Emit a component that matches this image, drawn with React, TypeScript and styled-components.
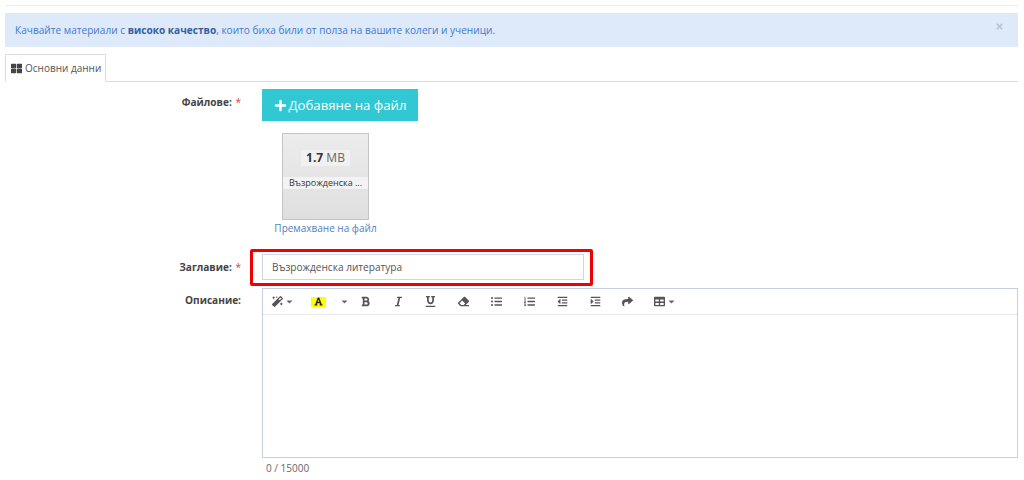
import React from 'react'
import styled, { createGlobalStyle } from 'styled-components'
import {
  FaBold,
  FaCaretDown,
  FaEraser,
  FaFont,
  FaIndent,
  FaItalic,
  FaListOl,
  FaListUl,
  FaMagic,
  FaOutdent,
  FaPlus,
  FaShare,
  FaTable,
  FaThLarge,
  FaTimes,
  FaUnderline,
} from 'react-icons/fa'

const GlobalStyle = createGlobalStyle`
  html, body {
    margin: 0;
    background: #fff;
    overflow: hidden;
  }
  body {
    font-family: "Open Sans", "Noto Sans", sans-serif;
    font-size: 10px;
    color: #444;
  }
`

const Page = styled.div`
  width: 1024px;
  height: 480px;
  box-sizing: border-box;
  padding: 5px 5px 0 5px;
  overflow: hidden;
`

const TopRule = styled.div`
  height: 1px;
  background: #eeeeee;
  margin-right: 1px;
`

const Alert = styled.div`
  margin: 7px 1px 0 0;
  height: 34px;
  background: #deeaf9;
  color: #3f78d0;
  display: flex;
  align-items: center;
  justify-content: space-between;
  padding: 0 14px 0 10px;
  font-size: 10.1px;
  strong {
    font-weight: 700;
    color: #33609f;
  }
`

const Close = styled.span`
  color: #bcc6d2;
  font-size: 9px;
  display: flex;
  margin: 0 0 7px 0;
`

const Tabs = styled.div`
  margin: 7px 1px 0 0;
  height: 28px;
  box-sizing: border-box;
  border-bottom: 1px solid #dddddd;
`

const Tab = styled.div`
  width: 101px;
  height: 28px;
  box-sizing: border-box;
  border: 1px solid #dddddd;
  border-bottom-color: #fff;
  background: #fff;
  display: flex;
  align-items: center;
  gap: 3px;
  padding-left: 5px;
  font-size: 10px;
  color: #555;
  svg {
    color: #444;
    font-size: 11px;
  }
`

const Row = styled.div<{ $top: number }>`
  display: grid;
  grid-template-columns: 236px 1fr;
  column-gap: 21px;
  margin-top: ${(p) => p.$top}px;
`

const Label = styled.label<{ $pad: number }>`
  text-align: right;
  font-size: 10.1px;
  font-weight: 700;
  color: #444;
  padding-top: ${(p) => p.$pad}px;
  line-height: 14px;
`

const Required = styled.span`
  color: #e0393e;
  margin-left: 1px;
  font-weight: 400;
`

const AddButton = styled.button`
  width: 156px;
  height: 32px;
  border: 0;
  padding: 0;
  background: #31c7d3;
  color: #fff;
  font-family: inherit;
  font-size: 13.2px;
  display: flex;
  align-items: center;
  justify-content: center;
  gap: 2px;
  svg {
    font-size: 13px;
  }
`

const FileBlock = styled.div`
  width: 115px;
  margin: 12px 0 0 6px;
  display: flex;
  flex-direction: column;
  align-items: center;
`

const Thumb = styled.div`
  width: 87px;
  height: 87px;
  box-sizing: border-box;
  border: 1px solid #c4c4c4;
  background: linear-gradient(#ececec, #dfdfdf);
  display: flex;
  flex-direction: column;
  align-items: center;
  padding-top: 16px;
`

const Size = styled.div`
  background: #f1f1f1;
  height: 16px;
  padding: 0 5px;
  font-size: 12px;
  line-height: 16px;
  color: #666;
  strong {
    color: #333;
    font-weight: 700;
  }
`

const FileName = styled.div`
  align-self: stretch;
  margin-top: 11px;
  height: 12px;
  background: #f3f3f3;
  font-size: 9px;
  line-height: 12px;
  color: #333;
  text-align: center;
  white-space: nowrap;
`

const RemoveLink = styled.a`
  margin-top: 1px;
  font-size: 10px;
  line-height: 14px;
  color: #4f81bd;
  white-space: nowrap;
`

const TitleField = styled.div`
  position: relative;
  width: 322px;
`

const TitleInput = styled.input`
  display: block;
  width: 100%;
  height: 26px;
  box-sizing: border-box;
  border: 1px solid #cdd6e4;
  padding: 0 9px;
  font-family: inherit;
  font-size: 10.1px;
  color: #555;
  outline: none;
`

const Annotation = styled.div`
  position: absolute;
  left: -12px;
  right: -9px;
  top: -5px;
  bottom: -6px;
  border: 3px solid #f00000;
  border-radius: 2px;
  pointer-events: none;
`

const Editor = styled.div`
  width: 756px;
  height: 170px;
  box-sizing: border-box;
  border: 1px solid #c5cfdf;
`

const Toolbar = styled.div`
  height: 26px;
  box-sizing: border-box;
  border-bottom: 1px solid #e8e8e8;
  position: relative;
  display: flex;
  align-items: center;
  padding-left: 9px;
`

const Tool = styled.span<{ $w: number }>`
  width: ${(p) => p.$w}px;
  display: flex;
  align-items: center;
  color: #555;
  font-size: 11px;
`

const Caret = styled(FaCaretDown)`
  font-size: 9px;
  margin-left: 2px;
  color: #666;
`

const Highlight = styled.span`
  background: #ffff00;
  width: 15px;
  height: 10px;
  display: flex;
  align-items: center;
  justify-content: center;
  color: #222;
  font-size: 9px;
`

const Counter = styled.div`
  margin: 3px 0 0 4px;
  font-size: 10px;
  line-height: 14px;
  color: #666;
`

export default function App() {
  return (
    <Page>
      <GlobalStyle />
      <TopRule />
      <Alert>
        <span>
          Качвайте материали с <strong>високо качество</strong>, които биха били от полза на вашите колеги и ученици.
        </span>
        <Close>
          <FaTimes />
        </Close>
      </Alert>
      <Tabs>
        <Tab>
          <FaThLarge />
          Основни данни
        </Tab>
      </Tabs>
      <Row $top={7}>
        <Label $pad={6}>
          Файлове: <Required>*</Required>
        </Label>
        <div>
          <AddButton>
            <FaPlus />
            Добавяне на файл
          </AddButton>
          <FileBlock>
            <Thumb>
              <Size>
                <strong>1.7</strong> MB
              </Size>
              <FileName>Възрожденска ...</FileName>
            </Thumb>
            <RemoveLink>Премахване на файл</RemoveLink>
          </FileBlock>
        </div>
      </Row>
      <Row $top={19}>
        <Label $pad={6}>
          Заглавие: <Required>*</Required>
        </Label>
        <TitleField>
          <TitleInput defaultValue="Възрожденска литература" />
          <Annotation />
        </TitleField>
      </Row>
      <Row $top={8}>
        <Label $pad={5}>Описание:</Label>
        <div>
          <Editor>
            <Toolbar>
              <Tool $w={39}>
                <FaMagic />
                <Caret />
              </Tool>
              <Tool $w={27}>
                <Highlight>
                  <FaFont />
                </Highlight>
              </Tool>
              <Tool $w={22}>
                <Caret />
              </Tool>
              <Tool $w={33}>
                <FaBold />
              </Tool>
              <Tool $w={32}>
                <FaItalic />
              </Tool>
              <Tool $w={33}>
                <FaUnderline />
              </Tool>
              <Tool $w={33}>
                <FaEraser />
              </Tool>
              <Tool $w={33}>
                <FaListUl />
              </Tool>
              <Tool $w={33}>
                <FaListOl />
              </Tool>
              <Tool $w={33}>
                <FaOutdent />
              </Tool>
              <Tool $w={32}>
                <FaIndent />
              </Tool>
              <Tool $w={32}>
                <FaShare />
              </Tool>
              <Tool $w={28}>
                <FaTable />
                <Caret />
              </Tool>
            </Toolbar>
          </Editor>
          <Counter>0 / 15000</Counter>
        </div>
      </Row>
    </Page>
  )
}
